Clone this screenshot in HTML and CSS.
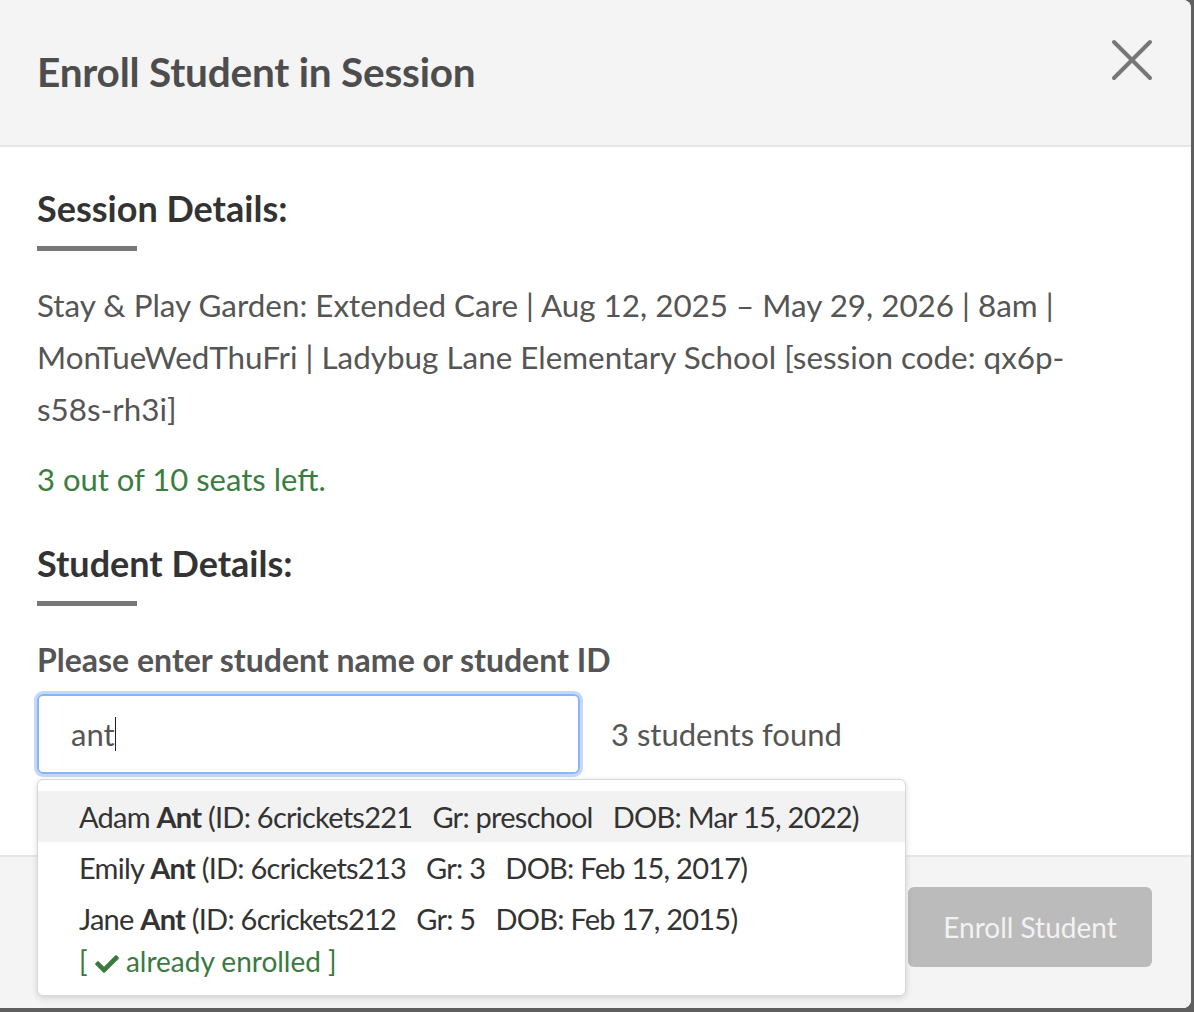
FILE: index.html
```html
<!DOCTYPE html>
<html lang="en">
<head>
<meta charset="utf-8">
<title>Enroll Student in Session</title>
<link rel="stylesheet" href="styles.css">
</head>
<body>
<div class="modal">
  <header class="modal-header">
    <h1 class="modal-title">Enroll Student in Session</h1>
    <button class="close-btn" aria-label="Close">
      <svg width="44" height="44" viewBox="0 0 44 44"><path d="M4 4 L40 40 M40 4 L4 40" stroke="#777" stroke-width="4" stroke-linecap="round" fill="none"/></svg>
    </button>
  </header>
  <main class="modal-body">
    <h2 class="section-title">Session Details:</h2>
    <div class="section-bar"></div>
    <p class="session-info">Stay &amp; Play Garden: Extended Care | Aug 12, 2025 – May 29, 2026 | 8am | MonTueWedThuFri | Ladybug Lane Elementary School [session code: qx6p-s58s-rh3i]</p>
    <p class="seats">3 out of 10 seats left.</p>
    <h2 class="section-title">Student Details:</h2>
    <div class="section-bar"></div>
    <label class="field-label">Please enter student name or student ID</label>
    <div class="search-row">
      <div class="search-wrap">
        <div class="search-input">ant<span class="caret"></span></div>
        <ul class="results">
          <li class="result active">Adam <b>Ant</b> (ID: 6crickets221&nbsp;&nbsp; Gr: preschool&nbsp;&nbsp; DOB: Mar 15, 2022)</li>
          <li class="result">Emily <b>Ant</b> (ID: 6crickets213&nbsp;&nbsp; Gr: 3&nbsp;&nbsp; DOB: Feb 15, 2017)</li>
          <li class="result">Jane <b>Ant</b> (ID: 6crickets212&nbsp;&nbsp; Gr: 5&nbsp;&nbsp; DOB: Feb 17, 2015)
            <span class="enrolled">[ <svg class="check" width="24" height="19" viewBox="0 0 512 410"><path d="M173.9 400.6L7.5 234.2c-10-10-10-26.2 0-36.2l36.2-36.2c10-10 26.2-10 36.2 0L192 273.9 432.1 33.8c10-10 26.2-10 36.2 0l36.2 36.2c10 10 10 26.2 0 36.2L210.1 400.6c-10 10-26.2 10-36.2 0z" fill="#3b7a3f"/></svg> already enrolled ]</span>
          </li>
        </ul>
      </div>
      <span class="found">3 students found</span>
    </div>
  </main>
  <footer class="modal-footer">
    <button class="enroll-btn" disabled>Enroll Student</button>
  </footer>
</div>
</body>
</html>
```

FILE: styles.css
```css
* { box-sizing: border-box; }

html, body {
  margin: 0;
  padding: 0;
}

body {
  width: 1194px;
  height: 1012px;
  background: #5f5f5f;
  font-family: Lato, "Open Sans", sans-serif;
  overflow: hidden;
}

.modal {
  width: 1191px;
  height: 1008px;
  background: #fff;
  border-radius: 0 8px 8px 0;
  display: flex;
  flex-direction: column;
}

.modal-header {
  height: 147px;
  flex: none;
  background: #f4f4f4;
  border-bottom: 2px solid #e6e6e6;
  border-radius: 0 8px 0 0;
  display: flex;
  align-items: center;
  justify-content: space-between;
  padding: 0 37px 0 37px;
}

.modal-title {
  margin: 0 0 2px;
  font-size: 40.5px;
  font-weight: 700;
  color: #4d4d4d;
  letter-spacing: -0.2px;
}

.close-btn {
  background: none;
  border: 0;
  padding: 0;
  width: 44px;
  height: 44px;
  margin-top: -26px;
  display: flex;
}

.modal-body {
  flex: 1;
  padding: 38px 37px 0 37px;
  position: relative;
}

.section-title {
  margin: 0;
  font-size: 36px;
  font-weight: 700;
  color: #333;
  line-height: 46px;
}

.section-bar {
  width: 100px;
  height: 5px;
  background: #777;
  margin-top: 15px;
}

.session-info {
  margin: 28px 0 0;
  max-width: 1100px;
  font-size: 31.4px;
  line-height: 52px;
  color: #555;
}

.seats {
  margin: 18px 0 0;
  font-size: 31px;
  line-height: 52px;
  color: #3b7d3f;
}

.seats + .section-title {
  margin-top: 35px;
}

.field-label {
  display: block;
  margin-top: 34px;
  font-size: 32px;
  font-weight: 700;
  color: #555;
  line-height: 40px;
}

.search-row {
  display: flex;
  align-items: center;
  margin-top: 14px;
}

.search-wrap {
  position: relative;
}

.search-input {
  width: 543px;
  height: 80px;
  border: 2px solid #8ab4f8;
  border-radius: 6px;
  box-shadow: 0 0 0 3px #c3d8fb;
  padding-left: 32px;
  display: flex;
  align-items: center;
  font-size: 31px;
  color: #555;
}

.caret {
  display: inline-block;
  width: 1.5px;
  height: 34px;
  background: #222;
}

.found {
  margin-left: 31px;
  font-size: 31px;
  color: #555;
}

.results {
  position: absolute;
  top: 85px;
  left: 0;
  width: 869px;
  margin: 0;
  padding: 11px 0 19px;
  list-style: none;
  background: #fff;
  border: 1px solid #d8d8d8;
  border-radius: 6px;
  box-shadow: 0 2px 6px rgba(0, 0, 0, 0.15);
  z-index: 5;
}

.result {
  padding: 0 41px;
  font-size: 29px;
  line-height: 51px;
  color: #333;
  letter-spacing: -0.75px;
}

.result b {
  font-weight: 700;
}

.result.active {
  background: #f2f2f2;
}

.enrolled {
  display: block;
  color: #3b7a3f;
  font-size: 28px;
  letter-spacing: 0;
  line-height: 30px;
  margin-top: 2px;
}

.check {
  vertical-align: -1px;
}

.modal-footer {
  height: 153px;
  flex: none;
  background: #f4f4f4;
  border-top: 2px solid #e6e6e6;
  border-radius: 0 0 8px 0;
  display: flex;
  align-items: center;
  justify-content: flex-end;
  padding: 0 39px 12px 0;
}

.enroll-btn {
  width: 244px;
  height: 80px;
  border: 0;
  border-radius: 6px;
  background: #bbbbbb;
  color: #f2f2f2;
  font-family: Lato, "Open Sans", sans-serif;
  font-size: 28px;
}
```
